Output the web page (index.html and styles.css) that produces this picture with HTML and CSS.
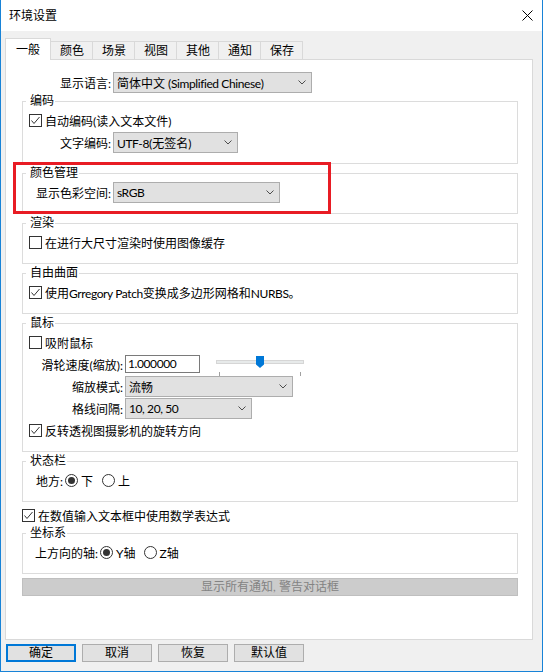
FILE: index.html
```html
<!DOCTYPE html>
<html lang="zh-CN">
<head>
    <meta charset="UTF-8">
    <meta name="viewport" content="width=device-width, initial-scale=1.0">
    <title>环境设置</title>
    <link rel="stylesheet" href="styles.css">
</head>
<body>
    <div class="window">
        <div class="titlebar">
            <span class="title">环境设置</span>
            <svg class="close" width="11" height="11" viewBox="0 0 11 11">
                <path d="M0.5 0.5L10.5 10.5M10.5 0.5L0.5 10.5" stroke="#000" stroke-width="1" fill="none"/>
            </svg>
        </div>

        <div class="tabstrip">
            <div class="tab active">一般</div>
            <div class="tab">颜色</div>
            <div class="tab">场景</div>
            <div class="tab">视图</div>
            <div class="tab">其他</div>
            <div class="tab">通知</div>
            <div class="tab">保存</div>
        </div>

        <div class="panel">
            <div class="row first">
                <span class="lbl lbl-lang">显示语言:</span>
                <div class="select w-lang"><span>简体中文 <span class="lat">(Simplified Chinese)</span></span><svg class="chev" width="8" height="5" viewBox="0 0 8 5"><path d="M0.5 0.5L4 4L7.5 0.5" stroke="#4d4d4d" fill="none"/></svg></div>
            </div>

            <fieldset class="group">
                <legend>编码</legend>
                <div class="row">
                    <span class="check"><svg width="11" height="11" viewBox="0 0 11 11"><path d="M1.5 5.5L4 8.5L9.5 2" stroke="#333" fill="none"/></svg></span>
                    自动编码(读入文本文件)
                </div>
                <div class="row">
                    <span class="lbl lbl-enc">文字编码:</span>
                    <div class="select w-enc"><span><span class="lat">UTF-8</span>(无签名)</span><svg class="chev" width="8" height="5" viewBox="0 0 8 5"><path d="M0.5 0.5L4 4L7.5 0.5" stroke="#4d4d4d" fill="none"/></svg></div>
                </div>
            </fieldset>

            <fieldset class="group">
                <legend>颜色管理</legend>
                <div class="row">
                    <span class="lbl lbl-enc">显示色彩空间:</span>
                    <div class="select w-color"><span class="lat">sRGB</span><svg class="chev" width="8" height="5" viewBox="0 0 8 5"><path d="M0.5 0.5L4 4L7.5 0.5" stroke="#4d4d4d" fill="none"/></svg></div>
                </div>
            </fieldset>

            <fieldset class="group">
                <legend>渲染</legend>
                <div class="row">
                    <span class="check"></span>
                    在进行大尺寸渲染时使用图像缓存
                </div>
            </fieldset>

            <fieldset class="group">
                <legend>自由曲面</legend>
                <div class="row">
                    <span class="check"><svg width="11" height="11" viewBox="0 0 11 11"><path d="M1.5 5.5L4 8.5L9.5 2" stroke="#333" fill="none"/></svg></span>
                    <span>使用<span class="lat">Grregory Patch</span>变换成多边形网格和<span class="lat">NURBS</span>。</span>
                </div>
            </fieldset>

            <fieldset class="group">
                <legend>鼠标</legend>
                <div class="row">
                    <span class="check"></span>
                    吸附鼠标
                </div>
                <div class="row">
                    <span class="lbl lbl-mouse">滑轮速度(缩放):</span>
                    <div class="input lat">1.000000</div>
                    <div class="slider">
                        <div class="track"></div>
                        <div class="ticks"><span></span><span></span></div>
                        <div class="thumb"></div>
                    </div>
                </div>
                <div class="row">
                    <span class="lbl lbl-mouse">缩放模式:</span>
                    <div class="select w-mode">流畅<svg class="chev" width="8" height="5" viewBox="0 0 8 5"><path d="M0.5 0.5L4 4L7.5 0.5" stroke="#4d4d4d" fill="none"/></svg></div>
                </div>
                <div class="row">
                    <span class="lbl lbl-mouse">格线间隔:</span>
                    <div class="select w-grid"><span class="lat">10, 20, 50</span><svg class="chev" width="8" height="5" viewBox="0 0 8 5"><path d="M0.5 0.5L4 4L7.5 0.5" stroke="#4d4d4d" fill="none"/></svg></div>
                </div>
                <div class="row">
                    <span class="check"><svg width="11" height="11" viewBox="0 0 11 11"><path d="M1.5 5.5L4 8.5L9.5 2" stroke="#333" fill="none"/></svg></span>
                    反转透视图摄影机的旋转方向
                </div>
            </fieldset>

            <fieldset class="group">
                <legend>状态栏</legend>
                <div class="row status">
                    <span>地方:</span>
                    <span class="radio on"></span><span>下</span>
                    <span class="radio gap-status"></span><span>上</span>
                </div>
            </fieldset>

            <div class="row math">
                <span class="check"><svg width="11" height="11" viewBox="0 0 11 11"><path d="M1.5 5.5L4 8.5L9.5 2" stroke="#333" fill="none"/></svg></span>
                在数值输入文本框中使用数学表达式
            </div>

            <fieldset class="group">
                <legend>坐标系</legend>
                <div class="row axis">
                    <span>上方向的轴:</span>
                    <span class="radio on"></span><span>Y轴</span>
                    <span class="radio gap-axis"></span><span>Z轴</span>
                </div>
            </fieldset>

            <div class="notify">显示所有通知, 警告对话框</div>
        </div>

        <div class="buttons">
            <div class="btn default">确定</div>
            <div class="btn">取消</div>
            <div class="btn">恢复</div>
            <div class="btn">默认值</div>
        </div>

        <div class="mark"></div>
    </div>
</body>
</html>
```

FILE: styles.css
```css
* {
    box-sizing: border-box;
}
body {
    margin: 0;
    font-family: Lato, "Noto Sans CJK SC", sans-serif;
    font-size: 12px;
    color: #000;
    background: #fff;
}
.window {
    position: relative;
    width: 543px;
    height: 672px;
    background: #f0f0f0;
    border: 1px solid #1883d7;
    border-top: none;
    display: flex;
    flex-direction: column;
}
.titlebar {
    height: 31px;
    flex: none;
    background: #fff;
    display: flex;
    align-items: center;
    justify-content: space-between;
    padding: 0 9px 0 8px;
}
.title {
    line-height: 16px;
}
.lat {
    letter-spacing: -0.4px;
}

/* tabs */
.tabstrip {
    display: flex;
    align-items: flex-end;
    padding: 7px 0 0 4px;
    position: relative;
    z-index: 1;
}
.tab {
    height: 18px;
    line-height: 16px;
    padding: 1px 8px 0 9px;
    border: 1px solid #d9d9d9;
    border-bottom: none;
    margin-left: -1px;
    background: #f0f0f0;
}
.tab.active {
    height: 22px;
    margin-left: 0;
    margin-bottom: -1px;
    padding: 0 10px;
    line-height: 21px;
    background: #fff;
    position: relative;
    z-index: 1;
}
.panel {
    height: 581px;
    margin: 0 9px 0 4px;
    border: 1px solid #d9d9d9;
    background: #fff;
    padding: 12px 14px 0 16px;
}

/* rows and controls */
.row {
    display: flex;
    align-items: center;
    height: 22px;
    white-space: nowrap;
}
.row.first {
    height: 21px;
}
.lbl {
    text-align: right;
    margin-right: 2px;
    flex: none;
}
.lbl-lang {
    width: 89px;
}
.lbl-enc {
    width: 82px;
}
.lbl-mouse {
    width: 94px;
}
.select {
    display: flex;
    align-items: center;
    justify-content: space-between;
    height: 21px;
    padding: 0 5px 0 3px;
    background: #e1e1e1;
    border: 1px solid #adadad;
    flex: none;
}
.w-lang {
    width: 199px;
}
.w-enc {
    width: 125px;
}
.w-color {
    width: 167px;
}
.w-mode {
    width: 168px;
}
.w-grid {
    width: 127px;
}
.check {
    width: 13px;
    height: 13px;
    flex: none;
    border: 1px solid #333;
    background: #fff;
    margin-right: 3px;
    display: flex;
    align-items: center;
    justify-content: center;
}
.radio {
    width: 13px;
    height: 13px;
    flex: none;
    border: 1px solid #333;
    border-radius: 50%;
    background: #fff;
    margin: 0 3px 0 2px;
    display: flex;
    align-items: center;
    justify-content: center;
}
.radio.on::after {
    content: "";
    width: 7px;
    height: 7px;
    border-radius: 50%;
    background: #333;
}
.status {
    padding-left: 7px;
}
.axis {
    padding-left: 6px;
}
.gap-status {
    margin-left: 9px;
}
.gap-axis {
    margin-left: 8px;
}
.input {
    width: 75px;
    height: 18px;
    border: 1px solid #7a7a7a;
    background: #fff;
    padding-left: 2px;
    line-height: 16px;
    flex: none;
}
.slider {
    position: relative;
    align-self: stretch;
    width: 88px;
    margin-left: 16px;
    padding-top: 7px;
}
.track {
    height: 4px;
    background: #e7eaea;
    border: 1px solid #d6d6d6;
}
.ticks {
    display: flex;
    justify-content: space-between;
    padding: 0 3px;
    margin-top: 8px;
}
.ticks span {
    width: 1px;
    height: 4px;
    background: #a0a0a0;
}
.thumb {
    position: absolute;
    left: 40px;
    top: 3px;
    width: 8px;
    height: 12px;
    background: #0078d7;
    clip-path: polygon(0 0, 100% 0, 100% 70%, 50% 100%, 0 70%);
}

/* group boxes */
.group {
    margin: 0;
    padding: 0 6px 10px;
    border: 1px solid #dcdcdc;
    min-width: 0;
}
.group + .group {
    margin-top: 1px;
}
.group legend {
    line-height: 16px;
    padding: 0 1px 0 4px;
    margin-left: -3px;
}
.math {
    height: 20px;
    margin-top: 3px;
}
.notify {
    margin-top: 4px;
    height: 18px;
    line-height: 16px;
    text-align: center;
    background: #ccc;
    border: 1px solid #bfbfbf;
    color: #838383;
}

/* dialog buttons */
.buttons {
    display: flex;
    gap: 6px;
    margin: 4px 0 0 5px;
}
.btn {
    width: 70px;
    height: 18px;
    line-height: 16px;
    text-align: center;
    background: #e1e1e1;
    border: 1px solid #adadad;
}
.btn.default {
    border: 2px solid #0078d7;
    line-height: 14px;
}

/* red annotation frame */
.mark {
    position: absolute;
    left: 12px;
    top: 162px;
    width: 318px;
    height: 52px;
    border: 3px solid #e81c24;
}
```
